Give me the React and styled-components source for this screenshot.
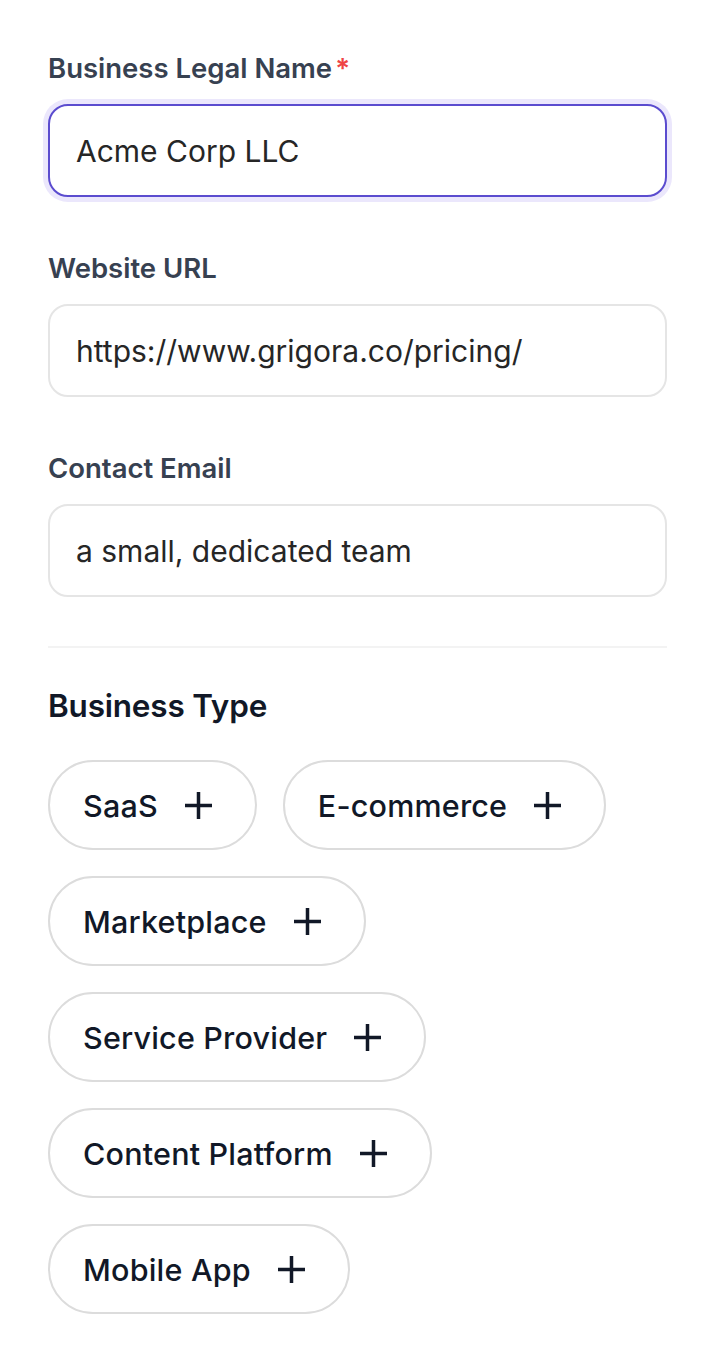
import React from "react";
import styled, { createGlobalStyle } from "styled-components";

const GlobalStyle = createGlobalStyle`
  body {
    margin: 0;
    background: #fff;
    font-family: Inter, "Noto Sans", sans-serif;
  }
`;

const Page = styled.div`
  padding: 51px 49px 40px 48px;
  display: flex;
  flex-direction: column;
`;

const Field = styled.div`
  display: flex;
  flex-direction: column;
  gap: 19px;
  margin-bottom: 54px;
`;

const Label = styled.label`
  font-size: 27.5px;
  font-weight: 600;
  color: #374151;
  line-height: 34px;
`;

const Required = styled.span`
  color: #ef4444;
  margin-left: 3px;
`;

const Input = styled.input`
  box-sizing: border-box;
  width: 100%;
  height: 93px;
  padding: 0 26px;
  border-radius: 20px;
  border: 2px solid ${(p) => (p.$focused ? "#5b4ccf" : "#e5e5e5")};
  box-shadow: ${(p) => (p.$focused ? "0 0 0 5px #ebe7fc" : "none")};
  font-family: Inter, "Noto Sans", sans-serif;
  font-size: 30px;
  color: #262626;
  background: #fff;
  outline: none;
`;

const Divider = styled.hr`
  border: 0;
  height: 2px;
  background: #f3f3f3;
  margin: -5px 0 39px;
`;

const SectionTitle = styled.h2`
  margin: 0 0 35px;
  font-size: 31.5px;
  font-weight: 600;
  color: #111827;
  line-height: 38px;
  letter-spacing: -0.2px;
`;

const ChipList = styled.div`
  display: flex;
  flex-wrap: wrap;
  gap: 26px;
`;

const Chip = styled.button`
  box-sizing: border-box;
  height: 90px;
  display: inline-flex;
  align-items: center;
  gap: 26px;
  padding: 0 42px 0 33px;
  border-radius: 45px;
  border: 2px solid #dcdcdc;
  background: #fff;
  font-family: Inter, "Noto Sans", sans-serif;
  font-size: 30.5px;
  font-weight: 450;
  letter-spacing: 0.2px;
  color: #111827;
  cursor: pointer;
`;

const PlusIcon = () => (
  <svg width="29" height="29" viewBox="0 0 29 29" fill="none">
    <path d="M14.5 1v27M1 14.5h27" stroke="#111827" strokeWidth="3.5" />
  </svg>
);

const types = [
  "SaaS",
  "E-commerce",
  "Marketplace",
  "Service Provider",
  "Content Platform",
  "Mobile App",
];

export default function App() {
  return (
    <>
      <GlobalStyle />
      <Page>
        <Field>
          <Label>
            Business Legal Name<Required>*</Required>
          </Label>
          <Input $focused defaultValue="Acme Corp LLC" />
        </Field>
        <Field>
          <Label>Website URL</Label>
          <Input defaultValue="https://www.grigora.co/pricing/" />
        </Field>
        <Field>
          <Label>Contact Email</Label>
          <Input defaultValue="a small, dedicated team" />
        </Field>
        <Divider />
        <SectionTitle>Business Type</SectionTitle>
        <ChipList>
          {types.map((t) => (
            <Chip key={t}>
              {t}
              <PlusIcon />
            </Chip>
          ))}
        </ChipList>
      </Page>
    </>
  );
}
